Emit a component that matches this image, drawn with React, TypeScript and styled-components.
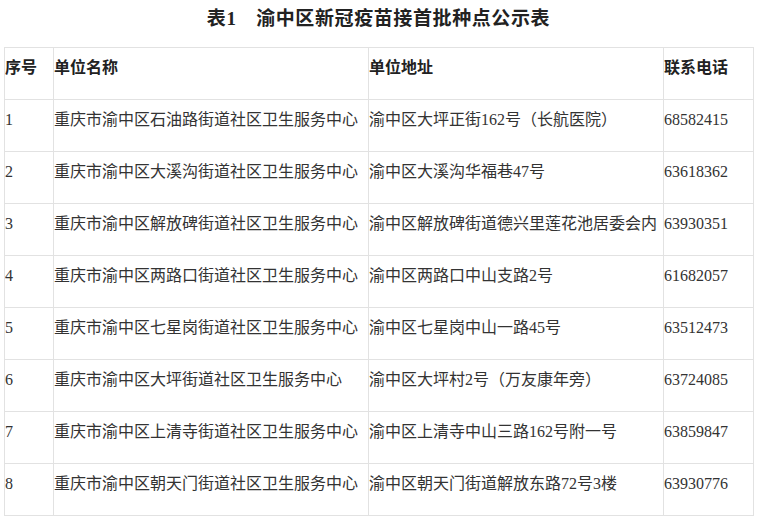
import React, { ReactElement } from 'react'
import styled, { createGlobalStyle } from 'styled-components'

const GlobalStyle = createGlobalStyle`
  body {
    margin: 0;
    background: #fff;
    font-family: "Liberation Serif", "Noto Sans CJK SC", serif;
    color: #333;
  }
`

const Page = styled.div`
  padding: 4px 8px 0 4px;
`

const Title = styled.h1`
  margin: 0;
  height: 43px;
  padding-top: 2px;
  box-sizing: border-box;
  text-align: center;
  font-size: 19px;
  line-height: 26px;
  font-weight: bold;
  color: #222;
  letter-spacing: 0.6px;
`

const Table = styled.table`
  width: 749px;
  border-collapse: collapse;
  table-layout: fixed;
`

const Cell = styled.td<{ $width?: number; $head?: boolean }>`
  width: ${(p) => (p.$width ? `${p.$width}px` : 'auto')};
  height: 52px;
  box-sizing: border-box;
  padding: 8px 0 0 0;
  vertical-align: top;
  text-align: left;
  border: 1px solid #e2e2e2;
  font-size: 16px;
  line-height: 24px;
  font-weight: ${(p) => (p.$head ? 'bold' : 'normal')};
  color: ${(p) => (p.$head ? '#222' : '#333')};
  white-space: nowrap;
  overflow: hidden;
`

const widths = [49, 315, 295, 90]

const rows: [string, string, string, string][] = [
  ['1', '重庆市渝中区石油路街道社区卫生服务中心', '渝中区大坪正街162号（长航医院）', '68582415'],
  ['2', '重庆市渝中区大溪沟街道社区卫生服务中心', '渝中区大溪沟华福巷47号', '63618362'],
  ['3', '重庆市渝中区解放碑街道社区卫生服务中心', '渝中区解放碑街道德兴里莲花池居委会内', '63930351'],
  ['4', '重庆市渝中区两路口街道社区卫生服务中心', '渝中区两路口中山支路2号', '61682057'],
  ['5', '重庆市渝中区七星岗街道社区卫生服务中心', '渝中区七星岗中山一路45号', '63512473'],
  ['6', '重庆市渝中区大坪街道社区卫生服务中心', '渝中区大坪村2号（万友康年旁）', '63724085'],
  ['7', '重庆市渝中区上清寺街道社区卫生服务中心', '渝中区上清寺中山三路162号附一号', '63859847'],
  ['8', '重庆市渝中区朝天门街道社区卫生服务中心', '渝中区朝天门街道解放东路72号3楼', '63930776'],
]

const header = ['序号', '单位名称', '单位地址', '联系电话']

const App = (): ReactElement => (
  <>
    <GlobalStyle />
    <Page>
      <Title>表1　渝中区新冠疫苗接首批种点公示表</Title>
      <Table>
        <thead>
          <tr>
            {header.map((h, i) => (
              <Cell as="th" key={h} $head $width={widths[i]}>
                {h}
              </Cell>
            ))}
          </tr>
        </thead>
        <tbody>
          {rows.map((row) => (
            <tr key={row[0]}>
              {row.map((c, i) => (
                <Cell key={i}>{c}</Cell>
              ))}
            </tr>
          ))}
        </tbody>
      </Table>
    </Page>
  </>
)

export default App
